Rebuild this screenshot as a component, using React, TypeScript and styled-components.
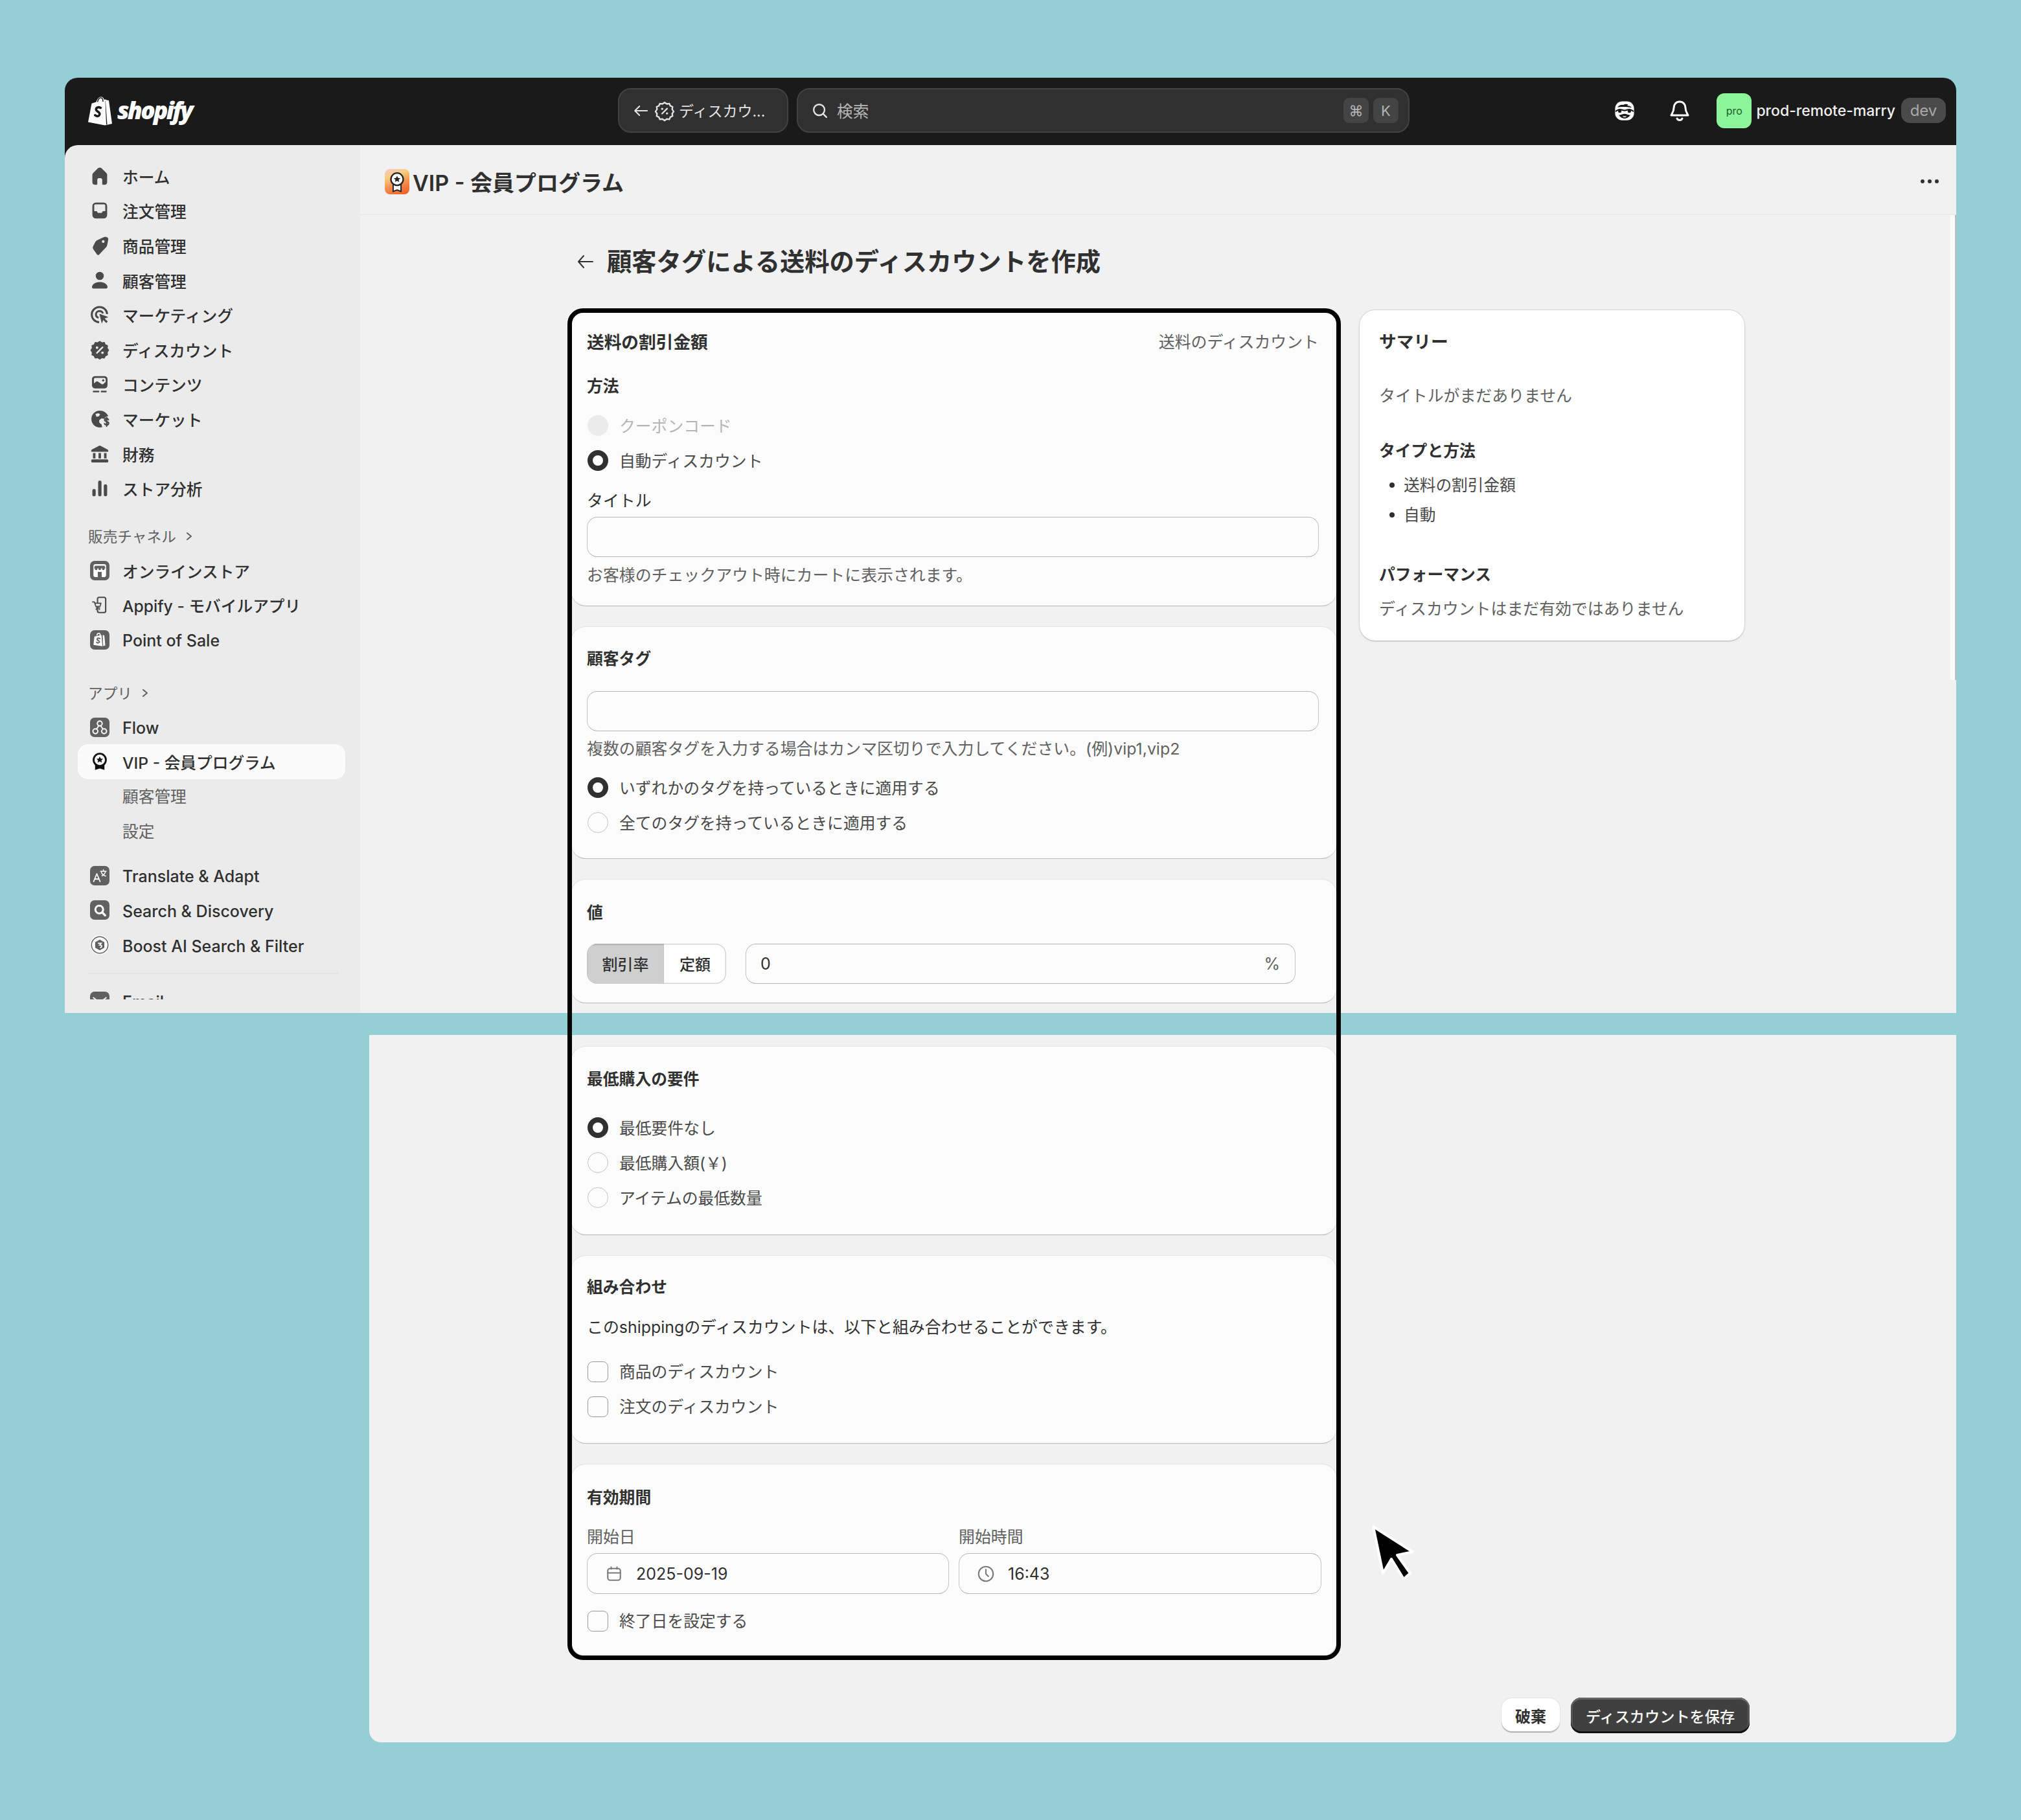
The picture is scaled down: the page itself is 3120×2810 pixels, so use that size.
import React from "react";
import styled, { createGlobalStyle } from "styled-components";

const GlobalStyle = createGlobalStyle`
  html, body { margin: 0; padding: 0; background: #94cfd6; }
  body { font-family: Inter, "Noto Sans CJK JP", sans-serif; color: #303030; }
  * { box-sizing: border-box; }
`;

const D = "#4a4a4a";
const BG = "#ebebeb";

const sidebarIcons: Record<string, React.ReactNode> = {
  home: <path fill={D} d="M10 3c-.6 0-1.1.2-1.5.6L4.7 7.4C4.2 7.9 4 8.500 4 9.100V15c0 1.100.9 2 2 2h1.300c.4 0 .7-.3.7-.7V13c0-.8.6-1.400 1.400-1.400h1.200c.8 0 1.400.6 1.400 1.400v3.300c0 .4.300.7.700.7H14c1.100 0 2-.9 2-2V9.100c0-.6-.2-1.200-.7-1.700l-3.800-3.800C11.100 3.200 10.600 3 10 3z" />,
  order: <>
    <rect x="4" y="3.500" width="12" height="13" rx="2.800" fill={D} />
    <path fill={BG} d="M5.500 6c0-.6.400-1 1-1h7c.6 0 1 .4 1 1v4.500h-2l-1 1.500h-3l-1-1.500h-2z" />
  </>,
  tag: <>
    <path fill={D} d="M15.500 3.200c-.5-.3-1.200-.3-2 0L8 5.700c-.8.400-1.300 1-1.700 1.700l-1.700 3.300c-.4.800-.3 1.700.2 2.500l3 4.200c.4.500 1.200.5 1.600.1l5.500-5.800c.6-.6.900-1.200 1.100-2l.9-4.400c.1-.7-.2-1.300-.4-1.600z" />
    <circle cx="12.800" cy="6.800" r="1.100" fill={BG} />
  </>,
  person: <>
    <circle cx="10" cy="6.300" r="3.300" fill={D} />
    <path fill={D} d="M3.700 15c.6-2.500 3.200-3.700 6.300-3.700s5.700 1.200 6.300 3.700c.2 1-.4 1.600-1.300 1.600H5c-.9 0-1.500-.6-1.300-1.600z" />
  </>,
  target: <>
    <path fill="none" stroke={D} strokeWidth="1.600" d="M9.500 16c-3.400-.2-6-2.800-6-6.100C3.500 6.400 6.300 3.700 9.800 3.700c3.300 0 6 2.400 6.200 5.700" />
    <path fill="none" stroke={D} strokeWidth="1.600" d="M9 12.500c-1.300-.4-2.100-1.500-2.100-2.700 0-1.600 1.300-2.800 2.900-2.800 1.300 0 2.400.8 2.800 2" />
    <path fill={D} d="M9.700 9.200l7.300 2.600-3 1.200 2.500 2.500-1.200 1.200-2.500-2.500-1.100 3z" />
  </>,
  discount: <>
    <path fill={D} d="M10 2.800l1.800 1.200 2.100-.3.900 1.900 1.900.9-.3 2.100 1.200 1.800-1.200 1.800.3 2.100-1.900.9-.9 1.900-2.100-.3L10 18l-1.800-1.200-2.100.3-.9-1.900-1.900-.9.3-2.100L2.400 10.400l1.200-1.800-.3-2.100 1.900-.9.9-1.900 2.100.3z" />
    <path stroke={BG} strokeWidth="1.300" strokeLinecap="round" d="M12.300 8l-4.600 4.600" />
    <circle cx="7.800" cy="8.300" r="1" fill={BG} />
    <circle cx="12.200" cy="12.400" r="1" fill={BG} />
  </>,
  content: <>
    <rect x="3.700" y="3.500" width="12.600" height="10" rx="2.400" fill={D} />
    <path fill={BG} d="M5.300 9.500V6c0-.5.400-1 1-1h7.500c.5 0 1 .5 1 1v2.300l-2 1.700c-.5.400-1 .2-1.500-.1L8.500 8c-.5-.4-1-.3-1.500 0z" />
    <circle cx="12.800" cy="7" r=".9" fill={D} />
    <path stroke={D} strokeWidth="1.300" strokeLinecap="round" d="M5 16h4M11.500 16H15" />
  </>,
  globe: <>
    <path fill={D} d="M10 3.200c-3.800 0-6.800 3-6.800 6.800s3 6.800 6.800 6.800c.8 0 1.500-.1 2.200-.4-.5-.6-.7-1.300-.7-2.100l-1.800-1.300-.2-2 1.800-1.500 2.500.2c.4-1 1.300-1.700 2.400-1.900l.7-.2C15.700 5 13 3.200 10 3.200z" />
    <path fill={BG} d="M6.500 5.800l2.500-.6 1.300 1-1 1.500-2 .5z" />
    <path fill="none" stroke={D} strokeWidth="1.200" strokeLinecap="round" d="M17 10.500c-.3-.6-.9-.9-1.500-.9-.9 0-1.500.5-1.500 1.200 0 1.600 3.200.9 3.200 2.600 0 .8-.7 1.300-1.700 1.300-.7 0-1.300-.3-1.600-.9M15.600 8.800v7" />
  </>,
  bank: <>
    <path fill={D} d="M10 3l6.300 3.300c.4.200.6.500.6.900v.9H3.100v-.9c0-.4.200-.7.600-.9z" />
    <path fill={D} d="M4.500 9.200h2v4.300h-2zM9 9.200h2v4.300H9zM13.500 9.200h2v4.300h-2z" />
    <rect x="3.100" y="14.300" width="13.800" height="2.500" rx=".8" fill={D} />
  </>,
  chart: <>
    <rect x="4" y="10.500" width="2.700" height="6" rx="1.300" fill={D} />
    <rect x="8.700" y="3.700" width="2.700" height="12.800" rx="1.300" fill={D} />
    <rect x="13.300" y="6.700" width="2.700" height="9.800" rx="1.300" fill={D} />
  </>,
  appify: <>
    <rect x="8.200" y="3.800" width="6.600" height="12.400" rx="1.300" fill={BG} stroke={D} strokeWidth="1.100" />
    <path fill={BG} stroke={D} strokeWidth=".9" strokeLinejoin="round" d="M3.800 7.600h1.700l.9 1h4.600l-.8 2.600H6.800l-1-3" />
    <path stroke={D} strokeWidth=".9" d="M6.800 12.500h3.500" />
    <circle cx="7.200" cy="13.700" r=".55" fill={D} />
    <circle cx="9.700" cy="13.700" r=".55" fill={D} />
  </>,
  vip: <>
    <path fill="#111" d="M6.200 12.500v4.200l3.800-1.200 3.800 1.200v-4.200z" />
    <circle cx="10" cy="8.500" r="5" fill="#fafafa" stroke="#111" strokeWidth="1.500" />
    <path fill="#111" d="M10 5.800l.8 1.700 1.900.2-1.400 1.200.4 1.900-1.700-1-1.700 1 .4-1.900-1.400-1.200 1.900-.2z" />
  </>,
};

const tileIcons: Record<string, React.ReactNode> = {
  store: <>
    <rect x="3.500" y="3.300" width="13" height="13.400" rx="2" fill="#fff" />
    <path fill="#616161" d="M5 5h10l.8 2.600H4.200z" />
    <circle cx="6.300" cy="8.200" r="1.300" fill="#616161" />
    <circle cx="10" cy="8.200" r="1.300" fill="#616161" />
    <circle cx="13.700" cy="8.200" r="1.300" fill="#616161" />
    <rect x="8" y="11.300" width="4" height="5.400" fill="#616161" />
  </>,
  pos: <>
    <path fill="#fff" d="M4.500 6.500L11.800 5l1 11.500-9.300-1.300z" />
    <path fill="none" stroke="#616161" strokeWidth="1.300" strokeLinecap="round" d="M10 8.700c-.4-.4-1-.6-1.500-.5-.9.100-1.300.7-1.200 1.300.2 1.100 2.200 1 2.300 2.300.1.800-.6 1.300-1.400 1.300-.6 0-1.100-.3-1.400-.7" />
    <path fill="none" stroke="#fff" strokeWidth="1" d="M7 5.600c.2-1.400 1-2.400 1.900-2.400S10.500 4.200 10.500 5.300" />
    <path fill="#fff" d="M13 5l1.700.4 1 10.300-2.200.6z" />
  </>,
  flow: <>
    <circle cx="10" cy="6" r="2.500" fill="none" stroke="#fff" strokeWidth="1.300" />
    <circle cx="5.500" cy="14" r="2.500" fill="none" stroke="#fff" strokeWidth="1.300" />
    <circle cx="14.500" cy="14" r="2.500" fill="none" stroke="#fff" strokeWidth="1.300" />
    <path stroke="#fff" strokeWidth="1.300" fill="none" d="M9 8.300l-2.300 3.500M11 8.300l2.300 3.500" />
  </>,
  translate: <>
    <path fill="none" stroke="#fff" strokeWidth="1.200" strokeLinejoin="round" d="M3.500 16.500L7 8l3.500 8.500M5 13.500h4" />
    <path fill="none" stroke="#fff" strokeWidth="1" d="M10.500 5.500h6.500M13.700 3.500v2M11.500 6c.5 2 2.500 4 5 4.500M15.800 6c-.5 2-2 3.500-3.800 4.300" />
  </>,
  search: <>
    <circle cx="9.500" cy="9.500" r="4" fill="none" stroke="#fff" strokeWidth="2" />
    <path stroke="#fff" strokeWidth="2.200" strokeLinecap="round" d="M12.800 12.800l2.700 2.700" />
  </>,
  mail: <>
    <path d="M3 6l7 5 7-5M3 15l5-5M17 15l-5-5" fill="none" stroke="#fff" strokeWidth="1.200" />
  </>,
};

const Page = styled.div`
  position: relative;
  width: 3120px;
  height: 2810px;
  padding-top: 120px;
  background: #94cfd6;
  overflow: hidden;
`;

const TopWindow = styled.div`
  margin-left: 100px;
  width: 2920px;
  height: 1444px;
  display: flex;
  flex-direction: column;
  background: #1a1a1a;
  border-radius: 20px 20px 0 0;
  overflow: hidden;
`;

const TopBar = styled.header`
  flex: 0 0 104px;
  padding-bottom: 3px;
  display: grid;
  grid-template-columns: 854px 1222px 1fr;
  align-items: center;
`;

const Logo = styled.div`
  display: flex;
  align-items: center;
  gap: 6px;
  padding-left: 35px;
`;

const LogoWord = styled.span`
  margin-top: -3px;
  font-family: "Open Sans", sans-serif;
  font-style: italic;
  font-weight: 800;
  font-size: 37px;
  letter-spacing: -2.700px;
  color: #fff;
`;

const CenterGroup = styled.div`
  display: flex;
  gap: 13px;
`;

const BackPill = styled.div`
  width: 263px;
  height: 69px;
  display: flex;
  align-items: center;
  gap: 5px;
  padding-left: 20px;
  background: #303030;
  border: 2px solid #424242;
  border-radius: 20px;
  color: #e3e3e3;
  font-size: 23px;
`;

const SearchPill = styled(BackPill)`
  flex: 1;
  width: auto;
  gap: 12px;
  padding: 0 15px 0 20px;
  color: #b5b5b5;
  font-size: 24.700px;
`;

const PillText = styled.span`
  margin-top: -2px;
`;

const Spacer = styled.div`
  flex: 1;
`;

const Kbd = styled.span`
  width: 39px;
  height: 39px;
  margin-left: -5px;
  display: flex;
  align-items: center;
  justify-content: center;
  border-radius: 9px;
  background: #444;
  color: #b5b5b5;
  font-size: 22px;
`;

const RightGroup = styled.div`
  display: flex;
  align-items: center;
  justify-content: flex-end;
  padding-right: 16px;
`;

const TopIcon = styled.svg<{ $mr: number }>`
  width: 40px;
  height: 40px;
  margin-right: ${(p) => p.$mr}px;
`;

const Avatar = styled.div`
  width: 54px;
  height: 54px;
  display: flex;
  align-items: center;
  justify-content: center;
  border-radius: 12px;
  background: #8cf59c;
  color: #1c5e2a;
  font-size: 16px;
`;

const StoreName = styled.span`
  margin: 0 9px 0 7px;
  color: #f0f0f0;
  font-size: 23px;
  font-weight: 500;
`;

const DevTag = styled.span`
  width: 69px;
  height: 39px;
  display: flex;
  align-items: center;
  justify-content: center;
  border-radius: 14px;
  background: #4a4a4a;
  color: #a8a8a8;
  font-size: 24px;
`;

const Body = styled.div`
  flex: 1;
  min-height: 0;
  display: flex;
`;

const Sidebar = styled.aside`
  flex: 0 0 456px;
  background: #ebebeb;
  border-top-left-radius: 20px;
  padding-bottom: 21px;
`;

const SideScroll = styled.nav`
  height: 100%;
  overflow: hidden;
  padding-top: 21px;
`;

const NavRow = styled.div<{ $active?: boolean; $sub?: boolean }>`
  height: 53.600px;
  margin: 0 23px 0 20px;
  padding-left: 15px;
  display: flex;
  align-items: center;
  gap: 16px;
  border-radius: 16px;
  background: ${(p) => (p.$active ? "#fbfbfb" : "transparent")};
  color: ${(p) => (p.$sub ? "#616161" : "#303030")};
  font-size: 24.700px;
  font-weight: ${(p) => (p.$sub ? 400 : 500)};
  white-space: nowrap;
`;

const LatinLabel = styled.span`
  padding-top: 3px;
  font-size: 25px;
`;

const SubText = styled.span`
  margin: -3px 0 0 54px;
`;

const NavIcon = styled.svg`
  flex: 0 0 38px;
  width: 38px;
  height: 38px;
`;

const TileSlot = styled.span`
  flex: 0 0 38px;
  display: flex;
  justify-content: center;
`;

const Tile = styled.span<{ $light?: boolean }>`
  width: 30px;
  height: 30px;
  display: block;
  border-radius: ${(p) => (p.$light ? "50%" : "7px")};
  background: ${(p) => (p.$light ? "#fbfbfb" : "#616161")};
  svg { display: block; width: 30px; height: 30px; }
`;

const NavLabel = styled.div<{ $mt: number }>`
  height: 50px;
  margin-top: ${(p) => p.$mt}px;
  padding: 0 0 2px 36px;
  display: flex;
  align-items: center;
  gap: 13px;
  color: #616161;
  font-size: 22.700px;
`;

const NavGap = styled.div<{ $h: number }>`
  height: ${(p) => p.$h}px;
`;

const NavDivider = styled.div`
  height: 2px;
  margin: 16px 34px 15px 36px;
  background: #e3e3e3;
`;

const Main = styled.main`
  position: relative;
  flex: 1;
  min-width: 0;
  background: #f1f1f1;
  display: flex;
  flex-direction: column;
  &::after {
    content: "";
    position: absolute;
    top: 108px;
    right: 0;
    width: 7px;
    height: 718px;
    background: #fbfbfb;
    border-right: 2px solid #bdbdbd;
  }
`;

const TitleBar = styled.div`
  flex: 0 0 108px;
  display: flex;
  align-items: center;
  padding: 6px 26px 0 38px;
  gap: 5px;
  border-bottom: 2px solid #ebebeb;
`;

const AppBadge = styled.span`
  width: 38px;
  height: 39px;
  border-radius: 8px;
  background: linear-gradient(160deg, #f5c6d0 0%, #f8cf7d 28%, #f28a4e 62%, #ee5a24 100%);
  svg { display: block; width: 38px; height: 39px; }
`;

const AppTitle = styled.h1`
  flex: 1;
  margin: 0;
  font-size: 34px;
  font-weight: 600;
  color: #303030;
`;

const Columns = styled.div<{ $pl: number }>`
  display: flex;
  align-items: flex-start;
  gap: 36px;
  padding-left: ${(p) => p.$pl}px;
`;

const PageHead = styled.div`
  height: 147px;
  padding: 47px 0 0 335px;
  display: flex;
  align-items: flex-start;
  gap: 20px;
`;

const PageHeadText = styled.h2`
  margin: 0;
  font-size: 38.300px;
  line-height: 50px;
  font-weight: 600;
  color: #303030;
`;

const BackIcon = styled.svg`
  width: 26px;
  height: 50px;
`;

const Stack = styled.div`
  width: 1181px;
  display: flex;
  flex-direction: column;
  gap: 33px;
`;

const Card = styled.section<{ $pt: number; $pb: number }>`
  padding: ${(p) => p.$pt}px 24px ${(p) => p.$pb}px;
  background: #fcfcfc;
  border-radius: 22px;
  box-shadow: 0 2px 1px -1px #b8b8b8, 0 0 0 1px #e3e3e3;
`;

const CardHead = styled.div`
  height: 36px;
  display: flex;
  align-items: center;
  justify-content: space-between;
  padding-right: 3px;
`;

const Heading = styled.div<{ $mt?: number; $lg?: boolean }>`
  height: 36px;
  margin-top: ${(p) => p.$mt ?? 0}px;
  display: flex;
  align-items: center;
  font-size: ${(p) => (p.$lg ? "26.700px" : "24.800px")};
  font-weight: 600;
  color: #303030;
`;

const Muted = styled.div<{ $mt?: number }>`
  height: 36px;
  margin-top: ${(p) => p.$mt ?? 0}px;
  display: flex;
  align-items: center;
  font-size: 24.900px;
  color: #616161;
`;

const Plain = styled(Muted)`
  color: #303030;
`;

const Field = styled.div<{ $mt?: number; $w?: number }>`
  height: 62px;
  margin-top: ${(p) => p.$mt ?? 0}px;
  width: ${(p) => (p.$w ? `${p.$w}px` : "100%")};
  display: flex;
  align-items: center;
  padding: 0 23px 0 22px;
  background: #fdfdfd;
  border: 1.500px solid #c4c4c4;
  border-top-color: #b5b5b5;
  border-bottom-color: #b5b5b5;
  border-radius: 16px;
  font-size: 25px;
  color: #303030;
`;

const TitleField = styled(Field)`
  width: 1130px;
`;

const OptionRow = styled.div<{ $mt?: number; $faded?: boolean }>`
  height: 54px;
  margin-top: ${(p) => p.$mt ?? 0}px;
  display: flex;
  align-items: center;
  gap: 17px;
  font-size: 24.800px;
  color: ${(p) => (p.$faded ? "#b5b5b5" : "#4a4a4a")};
`;

const OptionText = styled.span`
  margin-top: -3px;
`;

const Radio = styled.span<{ $state?: "on" | "off" | "disabled" }>`
  width: 32px;
  height: 32px;
  margin-left: 1px;
  border-radius: 50%;
  background: ${(p) => (p.$state === "disabled" ? "#ebebeb" : "#fdfdfd")};
  border: ${(p) =>
    p.$state === "on" ? "8px solid #303030" : p.$state === "disabled" ? "none" : "1.500px solid #c4c4c4"};
`;

const Check = styled.span`
  width: 32px;
  height: 32px;
  margin: 1px 0 0 1px;
  border-radius: 8px;
  background: #fdfdfd;
  border: 1.500px solid #9a9a9a;
`;

const ValueRow = styled.div`
  margin-top: 32px;
  display: flex;
  gap: 30px;
`;

const Segmented = styled.div`
  display: flex;
  height: 62px;
  width: 215px;
  border-radius: 16px;
  overflow: hidden;
  background: #fff;
  box-shadow: inset 0 0 0 1.500px #d4d4d4;
  font-size: 24px;
  font-weight: 500;
`;

const Segment = styled.span<{ $on?: boolean; $w: number }>`
  width: ${(p) => p.$w}px;
  padding-bottom: 2px;
  display: flex;
  align-items: center;
  justify-content: center;
  background: ${(p) => (p.$on ? "#cfcfcf" : "transparent")};
  box-shadow: ${(p) => (p.$on ? "inset 0 2px 2px #b0b0b0" : "none")};
`;

const FieldEnd = styled.span`
  margin-left: auto;
  color: #616161;
`;

const DateGrid = styled.div`
  display: grid;
  grid-template-columns: 559px 560px;
  column-gap: 15px;
  margin-top: 25px;
  width: 1134px;
`;

const DateField = styled(Field)`
  margin-top: 9px;
  height: 63px;
  gap: 19px;
  padding-left: 26px;
`;

const FieldIcon = styled.svg`
  width: 30px;
  height: 30px;
`;

const SummaryCard = styled.aside`
  width: 594px;
  height: 510px;
  padding: 28px 30px 0;
  background: #fff;
  border-radius: 24px;
  box-shadow: 0 2px 2px -1px #b8b8b8, 0 0 0 1.500px #dcdcdc;
`;

const BulletList = styled.ul`
  margin: 0;
  padding: 0;
  list-style: none;
`;

const Bullet = styled.li<{ $mt: number }>`
  height: 36px;
  margin-top: ${(p) => p.$mt}px;
  padding-left: 38px;
  display: flex;
  align-items: center;
  position: relative;
  font-size: 24.700px;
  color: #4a4a4a;
  &::before {
    content: "";
    position: absolute;
    left: 16px;
    top: 16px;
    width: 8px;
    height: 8px;
    border-radius: 50%;
    background: #303030;
  }
`;

const Band = styled.div`
  height: 34px;
`;

const BottomWindow = styled.div`
  margin-left: 570px;
  width: 2450px;
  height: 1092px;
  padding-top: 18px;
  background: #f1f1f1;
  border-radius: 0 0 18px 18px;
`;

const Footer = styled.div`
  margin-top: 64px;
  padding-right: 319px;
  display: flex;
  justify-content: flex-end;
  gap: 17px;
`;

const Discard = styled.button`
  width: 90px;
  height: 53px;
  margin-top: 1px;
  border: none;
  border-radius: 16px;
  background: #fff;
  box-shadow: inset 0 -2px 0 #b5b5b5, 0 0 0 1px #e3e3e3;
  font: 600 24px Inter, "Noto Sans CJK JP", sans-serif;
  color: #303030;
`;

const Save = styled.button`
  width: 276px;
  height: 55px;
  border: none;
  border-radius: 16px;
  background: #404040;
  box-shadow: inset 0 -3px 0 #111, inset 0 3px 0 #666, inset 3px 0 0 #555, inset -3px 0 0 #555;
  font: 500 23.200px Inter, "Noto Sans CJK JP", sans-serif;
  color: #fff;
`;

const Highlight = styled.div`
  position: absolute;
  left: 876px;
  top: 476px;
  width: 1194px;
  height: 2087px;
  border: 7px solid #000;
  border-radius: 24px;
  pointer-events: none;
`;

const Cursor = styled.svg`
  position: absolute;
  left: 2110px;
  top: 2347px;
  width: 84px;
  height: 102px;
`;

const primaryNav = [
  ["home", "ホーム"],
  ["order", "注文管理"],
  ["tag", "商品管理"],
  ["person", "顧客管理"],
  ["target", "マーケティング"],
  ["discount", "ディスカウント"],
  ["content", "コンテンツ"],
  ["globe", "マーケット"],
  ["bank", "財務"],
  ["chart", "ストア分析"],
];

const Chevron = () => (
  <svg width="14" height="14" viewBox="0 0 14 14">
    <path d="M4 2l6 5-6 5" fill="none" stroke="#616161" strokeWidth="2" strokeLinecap="round" strokeLinejoin="round" />
  </svg>
);

const SideItem = ({ icon, label }: { icon: string; label: string }) => (
  <NavRow>
    <NavIcon viewBox="0 0 20 20">{sidebarIcons[icon]}</NavIcon>
    {label}
  </NavRow>
);

const TileItem = ({ icon, label, latin }: { icon: string; label: string; latin?: boolean }) => (
  <NavRow>
    <TileSlot>
      <Tile>
        <svg viewBox="0 0 20 20">{tileIcons[icon]}</svg>
      </Tile>
    </TileSlot>
    {latin ? <LatinLabel>{label}</LatinLabel> : label}
  </NavRow>
);

const Option = ({ mt, faded, mark, label }: { mt?: number; faded?: boolean; mark: React.ReactNode; label: string }) => (
  <OptionRow $mt={mt} $faded={faded}>
    {mark}
    <OptionText>{label}</OptionText>
  </OptionRow>
);

export default function App() {
  return (
    <>
      <GlobalStyle />
      <Page>
        <TopWindow>
          <TopBar>
            <Logo>
              <svg width="40" height="46" viewBox="0 0 40 46">
                <path fill="#fff" d="M28 5.500l-2 .6C25 3 23 1.500 21 1.500c-3 0-6 3-7.500 8L6.500 11.700 1 40.500l26 5 11-2.500L33 7l-3.500-.5z" />
                <path fill="#1a1a1a" d="M27.500 8l1.500 36.500 1.500-.3L27.900 7.700z" />
                <path fill="none" stroke="#1a1a1a" strokeWidth="1.500" d="M15.500 9.500c1-4 3-6.500 5-6.500 2.500 0 3.500 3 3.500 6" />
                <path fill="none" stroke="#1a1a1a" strokeWidth="3.600" strokeLinecap="round" d="M20.500 18.500c-1.500-.8-3-1-4.300-.7-2 .5-3 2-2.800 3.500.3 2.800 5.500 3.300 5.500 6.800 0 2-2 3.500-4.200 3.200-1.200-.2-2.300-.7-3-1.500" />
              </svg>
              <LogoWord>shopify</LogoWord>
            </Logo>
            <CenterGroup>
              <BackPill>
                <svg width="28" height="28" viewBox="0 0 20 20">
                  <path d="M16.500 10h-13M8 5l-5 5 5 5" fill="none" stroke="#e3e3e3" strokeWidth="1.500" strokeLinecap="round" strokeLinejoin="round" />
                </svg>
                <svg width="34" height="34" viewBox="0 0 20 20">
                  <path fill="none" stroke="#e3e3e3" strokeWidth="1.400" d="M10 2.500l2 1.300 2.300-.3.900 2 2 .9-.3 2.300 1.300 2-1.300 2 .3 2.100-2 1-.9 2-2.300-.3-2 1.300-2-1.300-2.300.3-.9-2-2-1 .3-2.100-1.300-2 1.300-2-.3-2.300 2-.9.9-2 2.300.3z" />
                  <path stroke="#e3e3e3" strokeWidth="1.300" strokeLinecap="round" d="M12.300 8l-4.600 4.600" />
                  <circle cx="7.800" cy="8.300" r="1" fill="#e3e3e3" />
                  <circle cx="12.200" cy="12.400" r="1" fill="#e3e3e3" />
                </svg>
                <PillText>ディスカウ...</PillText>
              </BackPill>
              <SearchPill>
                <svg width="28" height="28" viewBox="0 0 20 20">
                  <circle cx="9" cy="9" r="6" fill="none" stroke="#e3e3e3" strokeWidth="1.700" />
                  <path stroke="#e3e3e3" strokeWidth="1.700" strokeLinecap="round" d="M13.500 13.500l3.500 3.500" />
                </svg>
                <PillText>検索</PillText>
                <Spacer />
                <Kbd>⌘</Kbd>
                <Kbd>K</Kbd>
              </SearchPill>
            </CenterGroup>
            <RightGroup>
              <TopIcon $mr={45} viewBox="0 0 20 20">
                <rect x="2.700" y="2.800" width="14.600" height="14.600" rx="5.500" fill="#fff" />
                <path fill="#1a1a1a" d="M4.500 7.300c1.500-1.800 3-2.200 4.500-1.800 1-.6 2.800-.8 3.700-.3-.3.300-.5.600-.8.800 1.500 0 2.800.5 3.600 1.600-3-.7-8.500-.9-11 -.3z" />
                <path fill="none" stroke="#1a1a1a" strokeWidth="1.100" d="M3 10.300c1 0 1.500-1.300 3.200-1.300 1.500 0 2.700.8 3.800.8s2.300-.8 3.800-.8c1.700 0 2.200 1.300 3.200 1.300" />
                <circle cx="6.300" cy="10.200" r="1.300" fill="#1a1a1a" />
                <circle cx="13.700" cy="10.200" r="1.300" fill="#1a1a1a" />
                <path fill="#1a1a1a" d="M5.500 13.300c1.500.3 2.800-.9 4.500-.9s3 1.200 4.500.9c-1 1.800-2.800 2.700-4.500 2.700s-3.500-.9-4.500-2.700z" />
                <path fill="#fff" d="M8.500 14c1 .4 2 .4 3 0-.3.800-.9 1.100-1.500 1.100s-1.200-.3-1.500-1.100z" />
              </TopIcon>
              <TopIcon $mr={37} viewBox="0 0 20 20">
                <path fill="none" stroke="#fff" strokeWidth="1.500" strokeLinejoin="round" d="M10 3c-2.700 0-4.500 2-4.500 4.700 0 3-1.500 4.500-2 5.800h13c-.5-1.300-2-2.800-2-5.800C14.500 5 12.700 3 10 3z" />
                <path fill="none" stroke="#fff" strokeWidth="1.500" strokeLinecap="round" d="M8 16c.4.800 1.100 1.200 2 1.200s1.600-.4 2-1.200" />
              </TopIcon>
              <Avatar>pro</Avatar>
              <StoreName>prod-remote-marry</StoreName>
              <DevTag>dev</DevTag>
            </RightGroup>
          </TopBar>
          <Body>
            <Sidebar>
              <SideScroll>
                {primaryNav.map(([icon, label]) => (
                  <SideItem key={label} icon={icon} label={label} />
                ))}
                <NavLabel $mt={23}>
                  販売チャネル <Chevron />
                </NavLabel>
                <TileItem icon="store" label="オンラインストア" />
                <SideItem icon="appify" label="Appify - モバイルアプリ" />
                <TileItem icon="pos" label="Point of Sale" latin />
                <NavLabel $mt={31}>
                  アプリ <Chevron />
                </NavLabel>
                <TileItem icon="flow" label="Flow" latin />
                <NavRow $active>
                  <NavIcon viewBox="0 0 20 20">{sidebarIcons.vip}</NavIcon>
                  VIP - 会員プログラム
                </NavRow>
                <NavRow $sub>
                  <SubText>顧客管理</SubText>
                </NavRow>
                <NavRow $sub>
                  <SubText>設定</SubText>
                </NavRow>
                <NavGap $h={15} />
                <TileItem icon="translate" label="Translate & Adapt" latin />
                <TileItem icon="search" label="Search & Discovery" latin />
                <NavRow>
                  <TileSlot>
                    <Tile $light>
                      <svg viewBox="0 0 20 20">
                        <circle cx="10" cy="10" r="8.500" fill="none" stroke="#616161" strokeWidth="1" />
                        <path fill="#616161" d="M10 4.500l4.700 2.700v5.600L10 15.500l-4.700-2.700V7.200z" />
                        <path fill="none" stroke="#fbfbfb" strokeWidth="1.200" d="M8 8.300h3.500l-1.500 1.700c1.500 0 2 .7 2 1.400 0 .8-.7 1.300-1.700 1.300" />
                      </svg>
                    </Tile>
                  </TileSlot>
                  <LatinLabel>Boost AI Search & Filter</LatinLabel>
                </NavRow>
                <NavDivider />
                <TileItem icon="mail" label="Email" latin />
              </SideScroll>
            </Sidebar>
            <Main>
              <TitleBar>
                <AppBadge>
                  <svg viewBox="0 0 20 20">
                    <path fill="#fff" stroke="#222" strokeWidth="1" d="M6.800 12v6l3.200-1.300 3.200 1.300v-6z" />
                    <circle cx="10" cy="8" r="5" fill="#fff" stroke="#222" strokeWidth="1.200" />
                    <path fill="#222" d="M10 5.300l.8 1.700 1.900.2-1.400 1.200.4 1.900-1.700-1-1.700 1 .4-1.900-1.400-1.200 1.900-.2z" />
                  </svg>
                </AppBadge>
                <AppTitle>VIP - 会員プログラム</AppTitle>
                <svg width="30" height="8" viewBox="0 0 30 8">
                  <circle cx="4" cy="4" r="3" fill="#303030" />
                  <circle cx="15" cy="4" r="3" fill="#303030" />
                  <circle cx="26" cy="4" r="3" fill="#303030" />
                </svg>
              </TitleBar>
              <PageHead>
                <BackIcon viewBox="0 0 26 50">
                  <path d="M24 25H2M10 16l-8 9 8 9" fill="none" stroke="#303030" strokeWidth="2" strokeLinecap="round" strokeLinejoin="round" />
                </BackIcon>
                <PageHeadText>顧客タグによる送料のディスカウントを作成</PageHeadText>
              </PageHead>
              <Columns $pl={326}>
                <Stack>
                  <Card $pt={29} $pb={31}>
                    <CardHead>
                      <Heading $lg>送料の割引金額</Heading>
                      <Muted>送料のディスカウント</Muted>
                    </CardHead>
                    <Heading $mt={32}>方法</Heading>
                    <Option mt={18} faded mark={<Radio $state="disabled" />} label="クーポンコード" />
                    <Option mark={<Radio $state="on" />} label="自動ディスカウント" />
                    <Plain $mt={15}>タイトル</Plain>
                    <TitleField $mt={9} />
                    <Muted $mt={8}>お客様のチェックアウト時にカートに表示されます。</Muted>
                  </Card>
                  <Card $pt={29} $pb={28}>
                    <Heading>顧客タグ</Heading>
                    <TitleField $mt={34} />
                    <Muted $mt={7}>複数の顧客タグを入力する場合はカンマ区切りで入力してください。(例)vip1,vip2</Muted>
                    <Option mt={17} mark={<Radio $state="on" />} label="いずれかのタグを持っているときに適用する" />
                    <Option mark={<Radio />} label="全てのタグを持っているときに適用する" />
                  </Card>
                  <Card $pt={31} $pb={29}>
                    <Heading>値</Heading>
                    <ValueRow>
                      <Segmented>
                        <Segment $on $w={119}>割引率</Segment>
                        <Segment $w={96}>定額</Segment>
                      </Segmented>
                      <Field $w={849}>
                        0<FieldEnd>%</FieldEnd>
                      </Field>
                    </ValueRow>
                  </Card>
                </Stack>
                <SummaryCard>
                  <Heading $lg>サマリー</Heading>
                  <Muted $mt={48}>タイトルがまだありません</Muted>
                  <Heading $mt={49}>タイプと方法</Heading>
                  <BulletList>
                    <Bullet $mt={17}>送料の割引金額</Bullet>
                    <Bullet $mt={10}>自動</Bullet>
                  </BulletList>
                  <Heading $mt={56}>パフォーマンス</Heading>
                  <Muted $mt={17}>ディスカウントはまだ有効ではありません</Muted>
                </SummaryCard>
              </Columns>
            </Main>
          </Body>
        </TopWindow>
        <Band />
        <BottomWindow>
          <Columns $pl={312}>
            <Stack>
              <Card $pt={30} $pb={30}>
                <Heading>最低購入の要件</Heading>
                <Option mt={32} mark={<Radio $state="on" />} label="最低要件なし" />
                <Option mark={<Radio />} label="最低購入額(￥)" />
                <Option mark={<Radio />} label="アイテムの最低数量" />
              </Card>
              <Card $pt={28} $pb={30}>
                <Heading>組み合わせ</Heading>
                <Plain $mt={26}>このshippingのディスカウントは、以下と組み合わせることができます。</Plain>
                <Option mt={25} mark={<Check />} label="商品のディスカウント" />
                <Option mark={<Check />} label="注文のディスカウント" />
              </Card>
              <Card $pt={31} $pb={28}>
                <Heading>有効期間</Heading>
                <DateGrid>
                  <div>
                    <Muted>開始日</Muted>
                    <DateField>
                      <FieldIcon viewBox="0 0 20 20">
                        <rect x="3.500" y="4.500" width="13" height="12" rx="2.500" fill="none" stroke="#7a7a7a" strokeWidth="1.400" />
                        <path d="M3.500 9h13M7 3v2M13 3v2" stroke="#7a7a7a" strokeWidth="1.400" strokeLinecap="round" />
                      </FieldIcon>
                      2025-09-19
                    </DateField>
                  </div>
                  <div>
                    <Muted>開始時間</Muted>
                    <DateField>
                      <FieldIcon viewBox="0 0 20 20">
                        <circle cx="10" cy="10" r="7.500" fill="none" stroke="#7a7a7a" strokeWidth="1.400" />
                        <path d="M10 5.500V10l2.500 2.500" fill="none" stroke="#7a7a7a" strokeWidth="1.400" strokeLinecap="round" />
                      </FieldIcon>
                      16:43
                    </DateField>
                  </div>
                </DateGrid>
                <Option mt={14} mark={<Check />} label="終了日を設定する" />
              </Card>
            </Stack>
          </Columns>
          <Footer>
            <Discard>破棄</Discard>
            <Save>ディスカウントを保存</Save>
          </Footer>
        </BottomWindow>
        <Highlight />
        <Cursor viewBox="0 0 84 102">
          <path
            d="M10 10L25 82L38 60L57 91L67 82L47 54L71 49Z"
            fill="#000"
            stroke="#fff"
            strokeWidth="4"
            strokeLinejoin="round"
          />
        </Cursor>
      </Page>
    </>
  );
}
